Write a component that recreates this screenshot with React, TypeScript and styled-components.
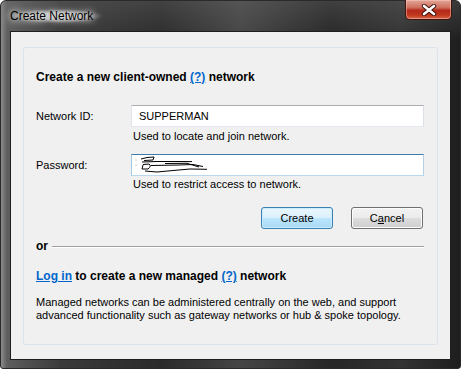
import React from 'react';
import styled, { createGlobalStyle } from 'styled-components';

const GlobalStyle = createGlobalStyle`
    body {
        margin: 0;
        background: #ffffff;
        font-family: "Liberation Sans", Arial, sans-serif;
    }
`;

const WindowFrame = styled.div`
    width: 461px;
    height: 369px;
    box-sizing: border-box;
    padding: 0 9px 8px 9px;
    display: flex;
    flex-direction: column;
    border-radius: 6px 6px 3px 3px;
    border: 1px solid #2a2a2a;
    background:
        linear-gradient(to bottom, rgba(120, 120, 120, 0.3), rgba(20, 20, 20, 0) 40px),
        linear-gradient(to right, #8c8c8c 0px, #5e5e5e 6px, #3a3a3a 60px, #2a2a2a 160px, #454545 240px, #262626 330px, #333333 400px, #1e1e1e 100%);
`;

const TitleBar = styled.div`
    height: 30px;
    display: flex;
    align-items: flex-start;
    justify-content: space-between;
`;

const Title = styled.div`
    margin-top: 8px;
    padding: 0 10px 0 0;
    font-size: 12px;
    color: #000;
    background: radial-gradient(ellipse at center, rgba(210, 210, 210, 0.8) 30%, rgba(200, 200, 200, 0) 72%);
    text-shadow: 0 0 6px #fff, 0 0 10px #fff;
`;

const CloseButton = styled.div`
    width: 47px;
    height: 20px;
    margin-right: -1px;
    margin-top: -1px;
    box-sizing: border-box;
    border: 1px solid #3f1510;
    border-top: none;
    border-radius: 0 0 5px 5px;
    display: flex;
    align-items: center;
    justify-content: center;
    background: linear-gradient(to bottom, #e2a798 0%, #cf6f5c 40%, #b4281a 55%, #c0391f 80%, #d8674b 100%);
    box-shadow: inset 0 0 0 1px rgba(255, 210, 200, 0.45);
`;

const Client = styled.div`
    flex: 1;
    display: flex;
    background: #f0f0f0;
    border: 1px solid #1e1e1e;
    padding: 15px 12px 14px 12px;
`;

const Panel = styled.div`
    flex: 1;
    display: flex;
    flex-direction: column;
    border: 1px solid #dbe4ee;
    border-radius: 3px;
    padding: 22px 13px 0 12px;
    font-size: 11px;
    color: #000;
    line-height: 15px;
`;

const Heading = styled.div<{ $gap?: number }>`
    font-weight: bold;
    font-size: 12px;
    margin-top: ${p => p.$gap ?? 0}px;
`;

const Link = styled.span`
    color: #0066cc;
    text-decoration: underline;
`;

const FormRow = styled.div<{ $gap: number }>`
    display: grid;
    grid-template-columns: 95px 1fr;
    align-items: center;
    margin-top: ${p => p.$gap}px;
`;

const Label = styled.div`
    padding-left: 0;
`;

const Field = styled.div<{ $focused?: boolean }>`
    height: 22px;
    box-sizing: border-box;
    display: flex;
    align-items: center;
    padding-left: 7px;
    background: #fff;
    border: 1px solid;
    border-color: ${p => p.$focused
        ? '#3d7bad #b5cfe7 #b7d9ed #a4c9e3'
        : '#abadb3 #dbdfe6 #e3e9ef #e2e3ea'};
`;

const Hint = styled.div<{ $gap: number }>`
    margin-left: 97px;
    margin-top: ${p => p.$gap}px;
`;

const ButtonRow = styled.div`
    display: flex;
    justify-content: flex-end;
    gap: 18px;
    margin-top: 15px;
    padding-right: 1px;
`;

const Button = styled.div<{ $primary?: boolean }>`
    width: 72px;
    height: 22px;
    box-sizing: border-box;
    display: flex;
    align-items: center;
    justify-content: center;
    border-radius: 3px;
    border: 1px solid ${p => p.$primary ? '#3c7fb1' : '#707070'};
    background: ${p => p.$primary
        ? 'linear-gradient(to bottom, #eaf6fd 0%, #d9f0fc 50%, #bee6fd 50%, #a7d9f5 100%)'
        : 'linear-gradient(to bottom, #f2f2f2 0%, #ebebeb 50%, #dddddd 50%, #cfcfcf 100%)'};
    box-shadow: inset 0 0 0 1px ${p => p.$primary ? '#c9ecfe' : '#fcfcfc'};
`;

const OrRow = styled.div`
    display: flex;
    align-items: center;
    margin-top: 10px;
    font-weight: bold;
    font-size: 12px;
`;

const Rule = styled.div`
    flex: 1;
    margin-left: 4px;
    border-top: 1px solid #a0a0a0;
    border-bottom: 1px solid #ffffff;
`;

const Paragraph = styled.div`
    margin-top: 12px;
    line-height: 13px;
`;

const CloseGlyph = () => (
    <svg width="16" height="12" viewBox="0 0 16 12">
        <path d="M3 2 L13 10 M13 2 L3 10" stroke="#3a0d08" strokeWidth="4.4" strokeLinecap="round" />
        <path d="M3 2 L13 10 M13 2 L3 10" stroke="#ffffff" strokeWidth="2.6" strokeLinecap="round" />
    </svg>
);

// the password was scribbled over by hand in the screenshot
const Scribble = () => (
    <svg width="80" height="20" viewBox="0 0 80 20" style={{ marginLeft: -4 }}>
        <circle cx="1" cy="5" r="0.6" fill="#b88a60" />
        <circle cx="1" cy="10" r="0.6" fill="#b88a60" />
        <g fill="none" stroke="#000" strokeWidth="1">
            <path d="M6 4 L12 2.5 L19 2 L18 5 L9 5.5" />
            <path d="M7 7 L22 6.5 L40 6.5 L57 6.6" />
            <path d="M8 9.5 L14 9 Q17 11 13 14 L7 14 L8 10" />
            <path d="M16 10.5 L44 10 L58 9.5 L68 11.5" />
            <path d="M10 16 L22 17 L38 15.5 L55 14 L72 14.3" />
            <path d="M30 8.5 L52 8.3 L64 12" />
        </g>
    </svg>
);

const App = () => {
    return (
        <>
            <GlobalStyle />
            <WindowFrame>
                <TitleBar>
                    <Title>Create Network</Title>
                    <CloseButton><CloseGlyph /></CloseButton>
                </TitleBar>
                <Client>
                    <Panel>
                        <Heading>Create a new client-owned <Link>(?)</Link> network</Heading>
                        <FormRow $gap={20}>
                            <Label>Network ID:</Label>
                            <Field>SUPPERMAN</Field>
                        </FormRow>
                        <Hint $gap={2}>Used to locate and join network.</Hint>
                        <FormRow $gap={10}>
                            <Label>Password:</Label>
                            <Field $focused><Scribble /></Field>
                        </FormRow>
                        <Hint $gap={1}>Used to restrict access to network.</Hint>
                        <ButtonRow>
                            <Button $primary>Create</Button>
                            <Button>C<u>a</u>ncel</Button>
                        </ButtonRow>
                        <OrRow>or<Rule /></OrRow>
                        <Heading $gap={15}><Link>Log in</Link> to create a new managed <Link>(?)</Link> network</Heading>
                        <Paragraph>
                            Managed networks can be administered centrally on the web, and support<br />
                            advanced functionality such as gateway networks or hub &amp; spoke topology.
                        </Paragraph>
                    </Panel>
                </Client>
            </WindowFrame>
        </>
    );
};

export default App;
